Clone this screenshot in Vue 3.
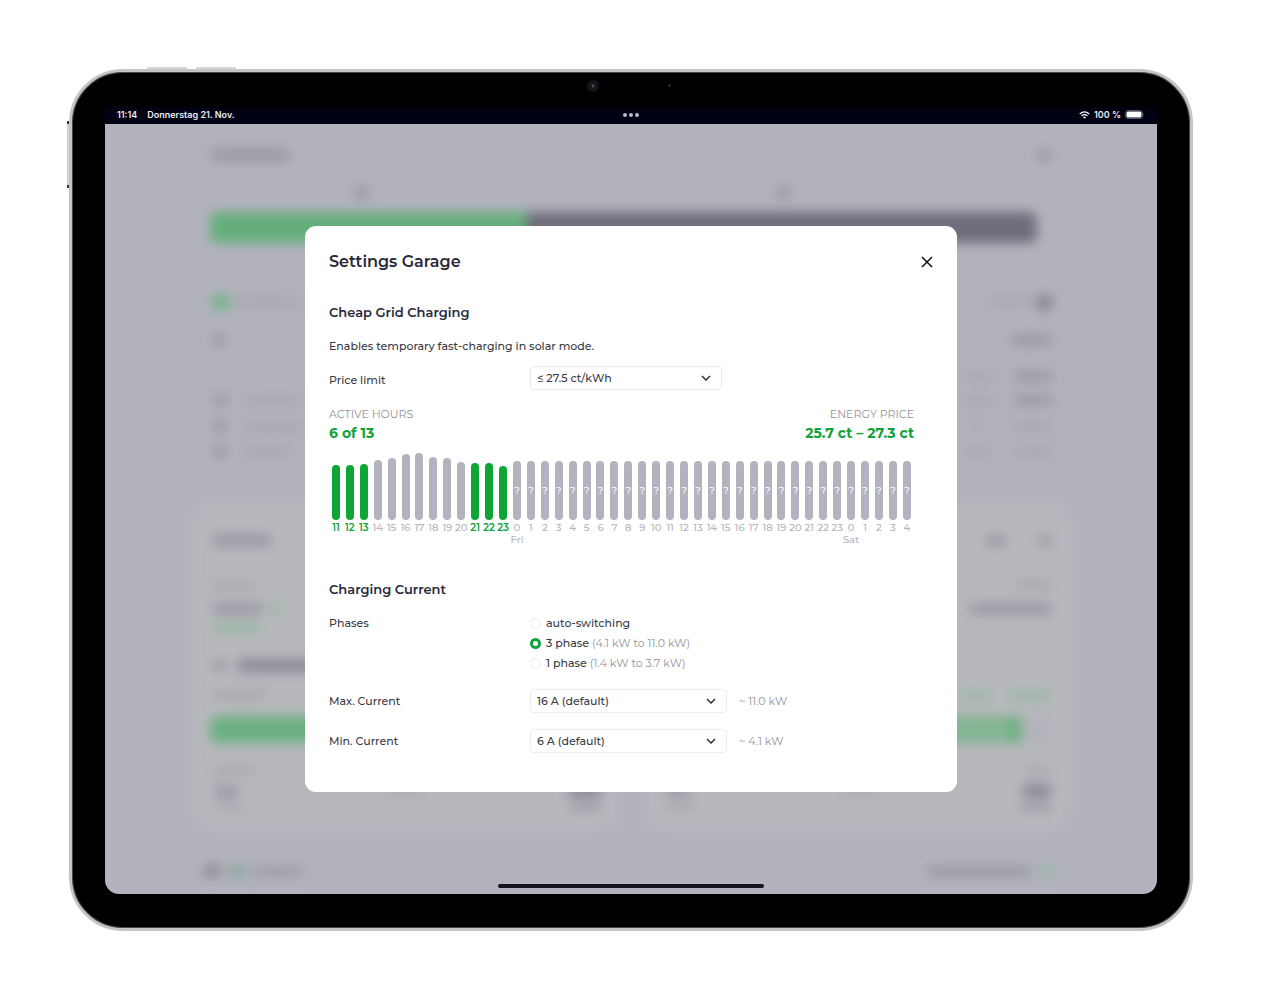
<script setup>
import { ref } from 'vue'

const priceLimit = ref('27.5')
const phases = ref('3')
const maxCurrent = ref('16')
const minCurrent = ref('6')

const knownHeights = [55, 55, 56, 60, 62, 66, 67, 63, 62, 58, 57, 57, 54]
const cheapHours = [11, 12, 13, 21, 22, 23]
const days = { 13: 'Fri', 37: 'Sat' }
const slots = Array.from({ length: 42 }, (_, i) => ({
  id: i,
  hour: (11 + i) % 24,
  known: i < 13,
  active: i < 13 && cheapHours.includes(11 + i),
  height: i < 13 ? knownHeights[i] : 59,
  day: days[i],
}))

const phaseOptions = [
  { value: 'auto', label: 'auto-switching', range: '' },
  { value: '3', label: '3 phase', range: '(4.1 kW to 11.0 kW)' },
  { value: '1', label: '1 phase', range: '(1.4 kW to 3.7 kW)' },
]

// Each piece is [space before, width, height, tone]
const overview = [
  { gap: 51, left: [[2, 18, 16, 'green'], [4, 66, 9, 'faint']], right: [[0, 46, 8, 'faint'], [4, 17, 17, 'dark']] },
  { gap: 22, left: [[2, 14, 14, 'mid']], right: [[0, 44, 12, 'mid']] },
  { gap: 20, left: [], right: [[0, 28, 9, 'faint'], [20, 40, 11, 'mid']] },
  { gap: 8, left: [[3, 14, 14, 'mid'], [16, 60, 9, 'faint']], right: [[0, 28, 9, 'faint'], [20, 40, 11, 'mid']] },
  { gap: 10, left: [[3, 14, 14, 'mid'], [16, 60, 9, 'faint']], right: [[0, 10, 9, 'faint'], [30, 40, 9, 'faint']] },
  { gap: 9, left: [[3, 14, 15, 'mid'], [16, 48, 9, 'faint']], right: [[0, 24, 9, 'faint'], [24, 38, 9, 'faint']] },
]

const cards = [
  {
    level: 100,
    top: [
      { gap: 27, left: [[2, 60, 13, 'mid']], right: [] },
      { gap: 29, left: [[2, 44, 7, 'faint']], right: [[0, 34, 7, 'faint']] },
      { gap: 8, left: [[2, 52, 12, 'mid'], [6, 12, 12, 'leaf']], right: [] },
      { gap: 2, left: [[2, 50, 9, 'leaf']], right: [] },
      { gap: 22, left: [[3, 14, 12, 'mid'], [10, 86, 13, 'dark']], right: [] },
      { gap: 14, left: [[2, 54, 8, 'faint']], right: [] },
    ],
    bottom: [
      { gap: 19, left: [[2, 44, 7, 'faint']], right: [] },
      { gap: 5, left: [[4, 24, 13, 'mid'], [150, 34, 7, 'faint']], right: [[0, 34, 14, 'dark']] },
      { gap: 0, left: [[6, 28, 7, 'faint']], right: [[0, 34, 7, 'mid']] },
    ],
  },
  {
    level: 92,
    top: [
      { gap: 27, left: [], right: [[0, 24, 11, 'mid'], [30, 14, 11, 'mid']] },
      { gap: 29, left: [], right: [[0, 36, 8, 'faint']] },
      { gap: 8, left: [], right: [[0, 84, 12, 'mid']] },
      { gap: 2, left: [], right: [] },
      { gap: 22, left: [], right: [] },
      { gap: 14, left: [], right: [[0, 30, 9, 'leaf'], [18, 44, 9, 'leaf']] },
    ],
    bottom: [
      { gap: 19, left: [], right: [[0, 28, 7, 'faint']] },
      { gap: 5, left: [[4, 26, 12, 'mid'], [150, 34, 7, 'faint']], right: [[0, 30, 14, 'dark']] },
      { gap: 0, left: [[6, 28, 7, 'faint']], right: [[0, 34, 7, 'mid']] },
    ],
  },
]

const pieceStyle = ([space, width, height]) => ({
  marginLeft: `${space}px`,
  width: `${width}px`,
  height: `${height}px`,
})
</script>

<template>
  <main class="page">
    <div class="device">
      <span class="volume volume-up"></span>
      <span class="volume volume-down"></span>
      <span class="pencil"></span>
      <span class="camera"></span>
      <span class="sensor"></span>

      <div class="screen">
        <header class="status">
          <div class="status-side">
            <time>11:14</time>
            <span>Donnerstag 21. Nov.</span>
          </div>
          <div class="dots"><i></i><i></i><i></i></div>
          <div class="status-side status-end">
            <svg class="wifi" viewBox="0 0 22 16" aria-hidden="true">
              <path d="M1.5 6 Q11 -2.5 20.5 6" />
              <path d="M5 9.8 Q11 4.6 17 9.8" />
              <path class="wifi-dot" d="M7.8 12.2 Q11 9.6 14.2 12.2 L11 15.6 Z" />
            </svg>
            <span class="percent">100 %</span>
            <svg class="battery" viewBox="0 0 40 18" aria-hidden="true">
              <rect x="1" y="1" width="34" height="16" rx="5" fill="none" stroke="#6b6b78" stroke-width="1.5" />
              <rect x="3" y="3" width="30" height="12" rx="3" fill="#fff" />
              <path d="M37 6 Q39.5 9 37 12 Z" fill="#6b6b78" />
            </svg>
          </div>
        </header>

        <div class="stage">
          <div class="dashboard" aria-hidden="true">
            <div class="row first">
              <div class="side"><i class="piece mid wide-title"></i></div>
              <div class="side"><i class="piece mid menu"></i></div>
            </div>
            <div class="sources">
              <div class="source-a"><i class="piece mid"></i></div>
              <div class="source-b"><i class="piece mid"></i></div>
            </div>
            <div class="energy"><i class="solar"></i><i class="grid"></i></div>
            <div v-for="(row, r) in overview" :key="r" class="row" :style="{ marginTop: row.gap + 'px' }">
              <div class="side"><i v-for="(p, i) in row.left" :key="i" class="piece" :class="p[3]" :style="pieceStyle(p)"></i></div>
              <div class="side"><i v-for="(p, i) in row.right" :key="i" class="piece" :class="p[3]" :style="pieceStyle(p)"></i></div>
            </div>
            <div class="cards">
              <div v-for="(card, c) in cards" :key="c" class="card">
                <div v-for="(row, r) in card.top" :key="r" class="row" :style="{ marginTop: row.gap + 'px' }">
                  <div class="side"><i v-for="(p, i) in row.left" :key="i" class="piece" :class="p[3]" :style="pieceStyle(p)"></i></div>
                  <div class="side"><i v-for="(p, i) in row.right" :key="i" class="piece" :class="p[3]" :style="pieceStyle(p)"></i></div>
                </div>
                <div class="soc" :class="{ partial: card.level < 100 }">
                  <i :style="{ width: card.level + '%' }"></i>
                </div>
                <div v-for="(row, r) in card.bottom" :key="r" class="row" :style="{ marginTop: row.gap + 'px' }">
                  <div class="side"><i v-for="(p, i) in row.left" :key="i" class="piece" :class="p[3]" :style="pieceStyle(p)"></i></div>
                  <div class="side"><i v-for="(p, i) in row.right" :key="i" class="piece" :class="p[3]" :style="pieceStyle(p)"></i></div>
                </div>
              </div>
            </div>
            <div class="row foot">
              <div class="side"><i class="piece dark logo"></i><i class="piece teal logo"></i><i class="piece mid version"></i></div>
              <div class="side"><i class="piece mid savings"></i><i class="piece leaf coin"></i></div>
            </div>
          </div>

          <section class="dialog" role="dialog" aria-modal="true" aria-labelledby="dialog-title">
            <div class="dialog-head">
              <h1 id="dialog-title">Settings Garage</h1>
              <button type="button" class="close" aria-label="Close">
                <svg viewBox="0 0 12 12" aria-hidden="true"><path d="M1 1 L11 11 M11 1 L1 11" /></svg>
              </button>
            </div>

            <div class="dialog-body">
              <h2>Cheap Grid Charging</h2>
              <p class="hint">Enables temporary fast-charging in solar mode.</p>

              <div class="field price">
                <label for="price-limit">Price limit</label>
                <div class="select narrow">
                  <select id="price-limit" v-model="priceLimit">
                    <option value="27.5">≤ 27.5 ct/kWh</option>
                  </select>
                  <svg viewBox="0 0 10 6" aria-hidden="true"><path d="M1 1 L5 5 L9 1" /></svg>
                </div>
              </div>

              <div class="summary">
                <div>
                  <div class="caption">ACTIVE HOURS</div>
                  <div class="value">6 of 13</div>
                </div>
                <div class="summary-end">
                  <div class="caption">ENERGY PRICE</div>
                  <div class="value">25.7 ct – 27.3 ct</div>
                </div>
              </div>

              <div class="chart">
                <div v-for="s in slots" :key="s.id" class="slot" :class="{ active: s.active }">
                  <div class="bar" :style="{ height: s.height + 'px' }"><span v-if="!s.known">?</span></div>
                  <div class="hour">{{ s.hour }}</div>
                  <div class="day">{{ s.day }}</div>
                </div>
              </div>

              <h2 class="second">Charging Current</h2>

              <div class="field phases" role="radiogroup" aria-labelledby="phases-label">
                <span id="phases-label">Phases</span>
                <div>
                  <label v-for="o in phaseOptions" :key="o.value" class="radio">
                    <input v-model="phases" type="radio" name="phases" :value="o.value" />
                    <span>{{ o.label }} <small v-if="o.range">{{ o.range }}</small></span>
                  </label>
                </div>
              </div>

              <div class="field current">
                <label for="max-current">Max. Current</label>
                <div class="select">
                  <select id="max-current" v-model="maxCurrent">
                    <option value="16">16 A (default)</option>
                  </select>
                  <svg viewBox="0 0 10 6" aria-hidden="true"><path d="M1 1 L5 5 L9 1" /></svg>
                </div>
                <span class="power">~ 11.0 kW</span>
              </div>

              <div class="field current">
                <label for="min-current">Min. Current</label>
                <div class="select">
                  <select id="min-current" v-model="minCurrent">
                    <option value="6">6 A (default)</option>
                  </select>
                  <svg viewBox="0 0 10 6" aria-hidden="true"><path d="M1 1 L5 5 L9 1" /></svg>
                </div>
                <span class="power">~ 4.1 kW</span>
              </div>
            </div>
          </section>
        </div>
        <span class="home"></span>
      </div>
    </div>
  </main>
</template>

<style>
body {
  margin: 0;
  background: #fff;
}
</style>

<style scoped>
* {
  box-sizing: border-box;
}

.page {
  padding: 69px;
  font-family: Montserrat, Inter, "Open Sans", sans-serif;
  font-size: 11px;
  font-weight: 500;
  color: #3a3b45;
}

.device {
  position: relative;
  padding: 35px 33px 34px;
  border: 3px solid #c6c4c0;
  border-radius: 54px;
  background: #000;
  box-shadow: inset 0 0 0 1px #4b4843;
}

.volume,
.pencil,
.camera,
.sensor,
.home {
  position: absolute;
}

.volume {
  top: -5px;
  width: 40px;
  height: 2px;
  background: #d9d7d4;
}

.volume-up {
  left: 75px;
}

.volume-down {
  left: 124px;
}

.pencil {
  top: 49px;
  left: -5px;
  width: 2px;
  height: 67px;
  background: #d5d3cf;
  border: solid #333;
  border-width: 3px 0;
}

.camera {
  top: 8px;
  left: calc(50% - 44px);
  width: 12px;
  height: 12px;
  border-radius: 50%;
  background: radial-gradient(circle, #4c4c58 0 1px, #14141a 2px 100%);
}

.sensor {
  top: 12px;
  left: calc(50% + 37px);
  width: 3px;
  height: 3px;
  border-radius: 50%;
  background: #2b2b30;
}

.screen {
  position: relative;
  overflow: hidden;
  border-radius: 0 0 14px 14px;
  background: #b3b3bd;
}

.status {
  display: grid;
  grid-template-columns: 1fr auto 1fr;
  align-items: center;
  height: 17px;
  padding: 0 12px 2px;
  background: #010114;
  color: #ececf2;
  font-family: Inter, "Open Sans", sans-serif;
  font-size: 9px;
  font-weight: 600;
}

.status-side {
  display: flex;
  align-items: center;
  gap: 10px;
}

.status-end {
  justify-content: flex-end;
  gap: 4px;
}

.dots {
  display: flex;
  gap: 2px;
}

.dots i {
  width: 4px;
  height: 4px;
  border-radius: 50%;
  background: #b9b9c6;
}

.wifi {
  width: 11px;
  height: 8px;
  fill: none;
  stroke: #fff;
  stroke-width: 2.5;
}

.wifi .wifi-dot {
  fill: #fff;
  stroke: none;
}

.battery {
  width: 20px;
  height: 9px;
}

.stage {
  display: grid;
}

.dashboard,
.dialog {
  grid-area: 1 / 1;
}

.dashboard {
  padding: 23px 104px 15px 105px;
  filter: blur(6px);
}

.row {
  display: flex;
  justify-content: space-between;
  height: 16px;
}

.side {
  display: flex;
  align-items: center;
}

.piece {
  display: block;
  flex: none;
  border-radius: 6px;
}

.mid {
  background: #9b9ba5;
}

.dark {
  background: #8b8b97;
}

.faint {
  background: #a7a7b0;
}

.green {
  background: #71b587;
}

.leaf {
  background: #98b8a4;
}

.teal {
  background: #8aa79b;
}

.wide-title {
  width: 80px;
  height: 14px;
}

.menu {
  width: 18px;
  height: 12px;
}

.sources {
  display: flex;
  align-items: center;
  height: 16px;
  margin-top: 22px;
}

.sources > div {
  display: flex;
  justify-content: center;
}

.sources .piece {
  width: 14px;
  height: 16px;
}

.source-a {
  flex: 36;
}

.source-b {
  flex: 64;
}

.energy {
  display: flex;
  height: 31px;
  margin-top: 11px;
  margin-right: 16px;
  border-radius: 7px;
  overflow: hidden;
}

.solar {
  flex: 38;
  background: #64ae7b;
}

.grid {
  flex: 61;
  background: #6f6d7c;
}

.cards {
  display: grid;
  grid-template-columns: 1fr 1fr;
  gap: 28px;
  margin: 46px -15px 0;
}

.card {
  min-width: 0;
  padding: 0 16px 13px 15px;
  border-radius: 12px;
  background: #b7b8bc;
}

.soc {
  display: flex;
  height: 27px;
  margin-top: 13px;
  border-radius: 7px;
  overflow: hidden;
  background: #b3b4bb;
}

.soc i {
  background: #6bb181;
}

.partial i {
  border-right: 12px solid #6bb181;
  background: #83b693;
}

.foot {
  margin-top: 35px;
}

.foot .logo {
  width: 19px;
  height: 12px;
  margin-left: -7px;
}

.foot .teal {
  margin-left: 6px;
}

.version {
  width: 50px;
  height: 9px;
  margin-left: 5px;
}

.savings {
  width: 106px;
  height: 11px;
}

.coin {
  width: 15px;
  height: 13px;
  margin-left: 6px;
}

.dialog {
  position: relative;
  place-self: center;
  width: 652px;
  max-width: 100%;
  padding: 24px 24px 39px;
  border-radius: 11px;
  background: #fff;
}

.dialog-head {
  display: flex;
  align-items: center;
  justify-content: space-between;
  height: 24px;
}

h1,
h2,
p {
  margin: 0;
}

h1,
h2 {
  font-weight: 600;
  color: #28293a;
}

h1 {
  font-size: 16px;
  line-height: 24px;
}

h2 {
  margin-top: 28px;
  font-size: 13px;
  line-height: 20px;
}

.close {
  display: flex;
  padding: 0;
  border: 0;
  background: none;
}

.close svg {
  width: 12px;
  height: 12px;
  stroke: #111;
  stroke-width: 1.5;
}

.dialog-body {
  padding-right: 19px;
}

.hint {
  margin-top: 14px;
  line-height: 20px;
}

.field {
  display: grid;
  grid-template-columns: 201px auto 1fr;
  align-items: center;
  line-height: 20px;
}

.price {
  align-items: end;
  margin-top: 10px;
}

.select {
  position: relative;
  width: 197px;
}

.narrow {
  width: 192px;
}

.select select {
  appearance: none;
  display: block;
  width: 100%;
  height: 24px;
  padding: 0 24px 0 6px;
  border: 1px solid #ececf0;
  border-radius: 4px;
  background: #fff;
  color: inherit;
  font: inherit;
}

.select svg {
  position: absolute;
  top: 9px;
  right: 11px;
  width: 10px;
  height: 6px;
  fill: none;
  stroke: #33343c;
  stroke-width: 1.5;
  pointer-events: none;
}

.summary {
  display: flex;
  justify-content: space-between;
  margin-top: 14px;
}

.summary-end {
  text-align: right;
}

.caption {
  line-height: 20px;
  font-weight: 400;
  color: #939399;
}

.value {
  font-size: 14px;
  line-height: 18px;
  font-weight: 700;
  color: #0fa33a;
}

.chart {
  display: flex;
  height: 108px;
  margin-top: 10px;
}

.slot {
  display: flex;
  flex: 1 1 0;
  min-width: 0;
  flex-direction: column;
  align-items: center;
  color: #b3b3bd;
  font-size: 10px;
  line-height: 12px;
}

.bar {
  display: flex;
  align-items: center;
  justify-content: center;
  width: 8px;
  margin-top: auto;
  border-radius: 4px;
  background: #b3b3bf;
  color: #fff;
}

.hour {
  margin-top: 2px;
  white-space: nowrap;
}

.day {
  height: 26px;
}

.active {
  color: #0fa33a;
  font-weight: 600;
}

.active .bar {
  background: #0fa535;
}

.second {
  margin-top: 19px;
}

.phases {
  align-items: start;
  margin-top: 14px;
}

.radio {
  display: flex;
  align-items: center;
  gap: 5px;
  height: 20px;
}

.radio input {
  appearance: none;
  width: 11px;
  height: 11px;
  margin: 0;
  border: 1px solid #ececf0;
  border-radius: 50%;
  background: #fff;
}

.radio input:checked {
  border: 3px solid #0fa33a;
}

.radio small,
.power {
  font-size: 11px;
  font-weight: 400;
  color: #939399;
}

.current {
  margin-top: 16px;
}

.power {
  margin-left: 12px;
}

.home {
  bottom: 6px;
  left: 50%;
  width: 266px;
  max-width: 60%;
  height: 4px;
  border-radius: 2px;
  background: #13141b;
  translate: -50% 0;
}
</style>
